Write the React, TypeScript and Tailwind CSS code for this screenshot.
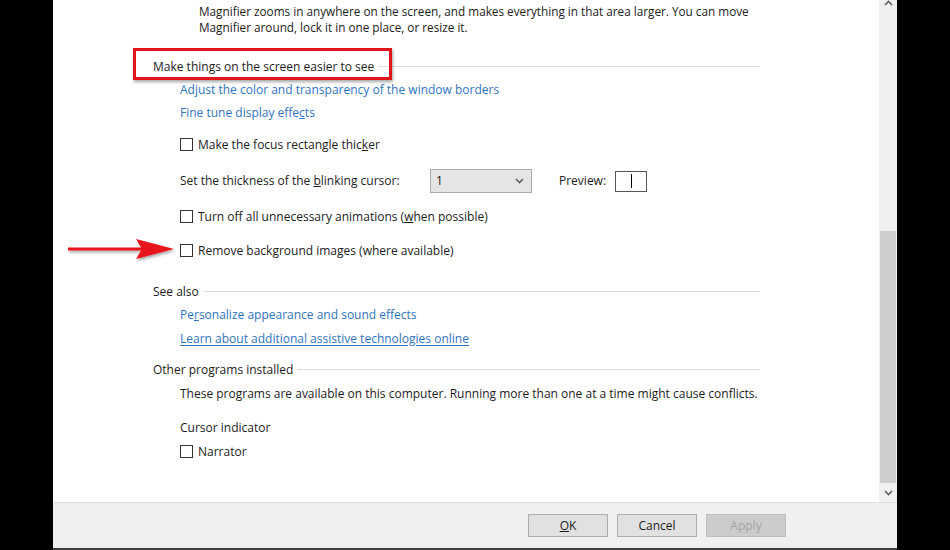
import type { ReactNode } from 'react';

const font = { fontFamily: '"Open Sans", "Noto Sans", Arial, sans-serif' };

function Checkbox({ children }: { children: ReactNode }) {
    return (
        <div className="flex h-[23px] items-center pl-[27px]">
            <span className="h-[13px] w-[13px] border border-[#333333] bg-white" />
            <span className="ml-[5px]">{children}</span>
        </div>
    );
}

function LinkRow({ children, underline = false, className = '' }: { children: ReactNode; underline?: boolean; className?: string }) {
    return (
        <div className={`flex h-[23px] items-center pl-[27px] ${className}`}>
            <span className={`text-[#2f74c0] ${underline ? 'underline underline-offset-2' : ''}`}>{children}</span>
        </div>
    );
}

function GroupHeading({ children, className = '' }: { children: ReactNode; className?: string }) {
    return (
        <div className={`flex h-[23px] items-center ${className}`}>
            <span className="shrink-0">{children}</span>
            <span className="ml-[4px] h-px flex-1 bg-[#dedede]" />
        </div>
    );
}

function Chevron({ up = false }: { up?: boolean }) {
    return (
        <svg width="9" height="6" viewBox="0 0 9 6" fill="none">
            <path d={up ? 'M1 5 L4.5 1.5 L8 5' : 'M1 1 L4.5 4.5 L8 1'} stroke="#606060" strokeWidth="1.6" />
        </svg>
    );
}

function Scrollbar() {
    return (
        <div className="flex w-[18px] flex-col bg-[#f0f0f0]">
            <div className="flex h-[6px] items-end justify-center overflow-hidden">
                <Chevron up />
            </div>
            <div className="h-[225px]" />
            <div className="mx-[1px] h-[252px] bg-[#cdcdcd]" />
            <div className="flex flex-1 items-center justify-center">
                <Chevron />
            </div>
        </div>
    );
}

function Button({ children, disabled = false }: { children: ReactNode; disabled?: boolean }) {
    return (
        <button
            className={`flex h-[23px] w-[80px] items-center justify-center border ${
                disabled ? 'border-[#bfbfbf] bg-[#cccccc] text-[#a3a3a3]' : 'border-[#adadad] bg-[#e1e1e1] text-[#1a1a1a]'
            }`}
        >
            {children}
        </button>
    );
}

export default function App() {
    return (
        <div style={font} className="relative flex h-[550px] w-[950px] bg-black text-[12px] text-[#1c1c1c]">
            <div className="ml-[53px] flex w-[844px] flex-col">
                <div className="flex min-h-0 flex-1 bg-white">
                    <div className="flex-1 pl-[100px] pr-[119px] pt-[3px]">
                        <p className="whitespace-nowrap pl-[46px] text-[11.75px] leading-[16px]">
                            Magnifier zooms in anywhere on the screen, and makes everything in that area larger. You can move
                            <br />
                            Magnifier around, lock it in one place, or resize it.
                        </p>

                        <GroupHeading className="mt-[20px]">
                            <span className="relative">
                                Make things on the screen easier to see
                                {/* highlight box */}
                                <span className="absolute left-[-20px] top-[-10px] h-[32px] w-[259px] border-[3px] border-[#e3141c] shadow-[1px_2px_3px_rgba(0,0,0,0.35)]" />
                            </span>
                        </GroupHeading>
                        <LinkRow>Adjust the color and transparency of the window borders</LinkRow>
                        <LinkRow>
                            Fine tune display effe<u>c</u>ts
                        </LinkRow>

                        <div className="mt-[9px]">
                            <Checkbox>
                                Make the focus rectangle thic<u>k</u>er
                            </Checkbox>
                        </div>

                        <div className="mt-[13px] flex h-[24px] items-center pl-[27px]">
                            <span className="w-[250px]">
                                Set the thickness of the <u>b</u>linking cursor:
                            </span>
                            <div className="flex h-[24px] w-[102px] items-center justify-between border border-[#acacac] bg-[#e5e5e5] pl-[5px] pr-[7px]">
                                <span>1</span>
                                <Chevron />
                            </div>
                            <span className="ml-[27px]">Preview:</span>
                            <div className="ml-[9px] flex h-[21px] w-[32px] items-center justify-center border border-[#555555] bg-white">
                                <span className="h-[14px] w-px bg-black" />
                            </div>
                        </div>

                        <div className="mt-[12px]">
                            <Checkbox>
                                Turn off all unnecessary animations (<u>w</u>hen possible)
                            </Checkbox>
                        </div>
                        <div className="mt-[11px]">
                            <Checkbox>Remove background images (where available)</Checkbox>
                        </div>

                        <GroupHeading className="mt-[18px]">See also</GroupHeading>
                        <LinkRow>
                            Pe<u>r</u>sonalize appearance and sound effects
                        </LinkRow>
                        <LinkRow underline className="mt-[1px]">
                            Learn about additional assistive technologies online
                        </LinkRow>

                        <GroupHeading className="mt-[8px]">Other programs installed</GroupHeading>
                        <div className="mt-[1px] flex h-[23px] items-center whitespace-nowrap pl-[27px]">
                            These programs are available on this computer. Running more than one at a time might cause conflicts.
                        </div>
                        <div className="mt-[11px] flex h-[23px] items-center pl-[27px]">Cursor indicator</div>
                        <div className="mt-[1px]">
                            <Checkbox>Narrator</Checkbox>
                        </div>
                    </div>
                    <Scrollbar />
                </div>

                <div className="flex h-[46px] items-center justify-end gap-[9px] border-t border-[#dfdfdf] bg-[#f0f0f0] pr-[111px]">
                    <Button>
                        <u>O</u>K
                    </Button>
                    <Button>Cancel</Button>
                    <Button disabled>Apply</Button>
                </div>
                <div className="h-[2px] bg-[#3c3c3c]" />
            </div>

            {/* red pointer arrow */}
            <svg className="absolute left-[66px] top-[238px]" width="112" height="24" viewBox="0 0 112 24">
                <defs>
                    <filter id="arrowShadow" x="-10%" y="-30%" width="130%" height="180%">
                        <feDropShadow dx="1" dy="2" stdDeviation="1.5" floodColor="#000" floodOpacity="0.35" />
                    </filter>
                </defs>
                <g filter="url(#arrowShadow)">
                    <rect x="2" y="9.5" width="74" height="3" fill="#e8131b" />
                    <path d="M70 1 L108 11 L70 21 L76 11 Z" fill="#e8131b" />
                </g>
            </svg>
        </div>
    );
}
